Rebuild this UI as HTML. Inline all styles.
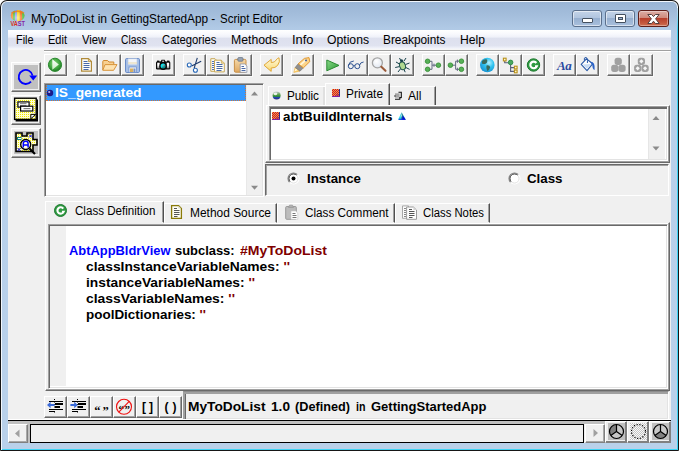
<!DOCTYPE html>
<html><head><meta charset="utf-8"><title>Script Editor</title>
<style>
html,body{margin:0;padding:0;background:#fff;}
body{width:679px;height:451px;overflow:hidden;position:relative;font-family:"Liberation Sans",sans-serif;font-size:12px;color:#000;}
*{box-sizing:border-box;}
div,svg,span{position:absolute;}
#win{left:0;top:0;width:679px;height:451px;border-radius:7px 7px 1px 1px;background:#161616;}
#win2{left:1px;top:1px;width:677px;height:449px;border-radius:6px 6px 0 0;background:#f2f7fc;}
#win3{left:2px;top:8px;width:676px;height:442px;background:linear-gradient(to bottom,#c8dcf0 0,#3dd4f5 22px,#3dd4f5 100%);}
#frame{left:2px;top:2px;width:675px;height:447px;border-radius:5px 5px 0 0;
 background:linear-gradient(to bottom,#9ab5d4 0px,#a3bddb 12px,#b1cae6 27px,#b8d0ea 56px,#b9d1ea 100%);}
#client{left:8px;top:30px;width:663px;height:413px;background:#f0f0f0;}
.t{white-space:nowrap;transform-origin:0 50%;line-height:16px;height:16px;}
#menubar{left:8px;top:30px;width:663px;height:19px;background:linear-gradient(to bottom,#ffffff 0,#f8f9fd 20%,#eff1f9 38%,#dde0ee 42%,#e0e3f0 82%,#eceef7 92%,#f6f7fb 100%);}
.tb{width:23px;height:22px;background:#f0f0f0;border:1px solid;border-color:#fff #696969 #696969 #fff;box-shadow:inset -1px -1px 0 #a0a0a0,1px 1px 0 #fafafa;}
.tb svg{left:0;top:0;width:21px;height:20px;overflow:visible;}
.sunk{border:1px solid;border-color:#a0a0a0 #fff #fff #a0a0a0;box-shadow:inset 1px 1px 0 #696969,inset -1px -1px 0 #e3e3e3;background:#fff;}
.b{font-weight:bold;font-size:13.6px;}
.tab{background:#f0f0f0;border:1px solid;border-color:#fff #505050 transparent #fff;box-shadow:inset -1px 0 0 #a0a0a0;}
.cap{border-radius:3px;border:1px solid #5a6f8c;background:linear-gradient(#c4d4e8 0,#b1c5df 45%,#97b0d0 50%,#a9c0dd 100%);box-shadow:inset 0 0 0 1px rgba(255,255,255,.55);}
.lb{width:30px;height:30px;background:#f0f0f0;border:1px solid;border-color:#fff #696969 #696969 #fff;box-shadow:inset -1px -1px 0 #a0a0a0;}
.lb div{}
</style></head><body>
<div id="win"></div><div id="win2"></div><div id="win3"></div><div id="frame"></div>
<div id="client"></div><div id="menubar"></div>
<div style="left:8px;top:49px;width:663px;height:1px;background:#f6f6f6"></div>
<svg style="left:8px;top:8px;width:20px;height:20px" viewBox="8 8 20 20"><defs><linearGradient id="bal" x1="0" x2="1"><stop offset="0" stop-color="#f08a28"/><stop offset=".13" stop-color="#f08a28"/><stop offset=".17" stop-color="#4cba3c"/><stop offset=".29" stop-color="#4cba3c"/><stop offset=".33" stop-color="#7a94f0"/><stop offset=".43" stop-color="#7a94f0"/><stop offset=".47" stop-color="#f8d418"/><stop offset=".62" stop-color="#f8d418"/><stop offset=".66" stop-color="#f06a18"/><stop offset=".8" stop-color="#f06a18"/><stop offset=".84" stop-color="#58bc40"/><stop offset="1" stop-color="#58bc40"/></linearGradient>
<radialGradient id="balh" cx="45%" cy="70%" r="60%"><stop offset="0" stop-color="#fff" stop-opacity=".55"/><stop offset="1" stop-color="#fff" stop-opacity="0"/></radialGradient></defs>
<ellipse cx="17.7" cy="15.6" rx="6.9" ry="5.6" fill="url(#bal)"/><ellipse cx="17.7" cy="15.6" rx="6.9" ry="5.6" fill="url(#balh)"/><path d="M11.5 13 Q17.7 9.5 24 13" fill="none" stroke="#f08020" stroke-width="1.6" opacity=".8"/>
<text x="10.4" y="26" font-family="Liberation Sans,sans-serif" font-size="6.4" font-weight="bold" textLength="14.6" lengthAdjust="spacingAndGlyphs"><tspan fill="#d83020">VA</tspan><tspan fill="#8424a4">ST</tspan></text></svg>
<div class="t " id="t0" style="transform:scaleX(1.0098);left:30.5px;top:10.7px;">MyToDoList in</div>
<div class="t " id="t1" style="transform:scaleX(0.9834);left:110.7px;top:10.7px;">GettingStartedApp -</div>
<div class="t " id="t2" style="transform:scaleX(0.9593);left:220px;top:10.7px;">Script Editor</div>
<div class="t " id="t3" style="transform:scaleX(0.9047);left:15.5px;top:31.5px;">File</div>
<div class="t " id="t4" style="transform:scaleX(0.9184);left:47.5px;top:31.5px;">Edit</div>
<div class="t " id="t5" style="transform:scaleX(0.9381);left:81.5px;top:31.5px;">View</div>
<div class="t " id="t6" style="transform:scaleX(0.8562);left:120.8px;top:31.5px;">Class</div>
<div class="t " id="t7" style="transform:scaleX(0.9391);left:162px;top:31.5px;">Categories</div>
<div class="t " id="t8" style="transform:scaleX(1.0210);left:231px;top:31.5px;">Methods</div>
<div class="t " id="t9" style="transform:scaleX(1.0742);left:291.5px;top:31.5px;">Info</div>
<div class="t " id="t10" style="transform:scaleX(1.0155);left:327px;top:31.5px;">Options</div>
<div class="t " id="t11" style="transform:scaleX(0.9862);left:383px;top:31.5px;">Breakpoints</div>
<div class="t " id="t12" style="transform:scaleX(1.0127);left:459.5px;top:31.5px;">Help</div>
<div class="cap" style="left:572px;top:10px;width:30px;height:17px"></div>
<div class="cap" style="left:605px;top:10px;width:30px;height:17px"></div>
<div class="cap" style="left:638px;top:10px;width:31px;height:17px;border-color:#5e1f1a;background:linear-gradient(#dcaea6 0,#d08a7c 45%,#b8402c 50%,#c4583e 80%,#cf7052 100%);box-shadow:inset 0 0 0 1px rgba(255,255,255,.35)"></div>
<div style="left:582px;top:18px;width:11px;height:5px;border:1px solid #44505f;background:#fff;border-radius:1px"></div>
<div style="left:615px;top:14px;width:11px;height:9px;border:1px solid #44505f;background:#fff;border-radius:1px"></div>
<div style="left:618px;top:17px;width:5px;height:3px;border:1px solid #44505f;background:#9db4d4"></div>
<svg style="left:646px;top:12.5px;width:15px;height:12px" viewBox="0 0 15 12"><path d="M1.8 1.5 L5.6 1.5 L7.5 3.6 L9.4 1.5 L13.2 1.5 L9.6 5.8 L13.2 10.5 L9.4 10.5 L7.5 8.2 L5.6 10.5 L1.8 10.5 L5.4 5.8 Z" fill="#fff" stroke="#54403f" stroke-width="1"/></svg>
<div style="left:44px;top:50px;width:627px;height:1px;background:#a0a0a0"></div><div style="left:44px;top:51px;width:627px;height:1px;background:#fff"></div>
<div class="tb" style="left:44px;top:54px"><svg viewBox="0 0 21 20"><defs><radialGradient id="gr1" cx="45%" cy="40%" r="60%"><stop offset="0" stop-color="#8ad87a"/><stop offset=".7" stop-color="#3aa03a"/><stop offset="1" stop-color="#1f7a24"/></radialGradient><linearGradient id="gr1b" x1="0" y1="0" x2="0" y2="1"><stop offset="0" stop-color="#fff"/><stop offset="1" stop-color="#c8ecc0"/></linearGradient></defs>
<circle cx="10" cy="9.8" r="6.6" fill="url(#gr1)" stroke="#2c8a30" stroke-width="1"/><path d="M7.3 4.2 L13.8 9.6 L7.3 14.8 Z" fill="url(#gr1b)"/></svg></div>
<div class="tb" style="left:75px;top:54px"><svg viewBox="0 0 21 20"><path d="M5.6 3.6 H12.4 L15.4 6.6 V16.2 H5.6 Z" fill="#fefefa" stroke="#b08a3a" stroke-width="1.2"/><path d="M12.4 3.6 V6.6 H15.4 Z" fill="#f0dca0" stroke="#b08a3a" stroke-width=".8"/>
<path d="M7.5 6.5 H11.5 M7.5 8.5 H13.5 M7.5 10.5 H13.5 M7.5 12.5 H13.5 M7.5 14.5 H12.5" stroke="#4a6aa8" stroke-width="1"/></svg></div>
<div class="tb" style="left:98px;top:54px"><svg viewBox="0 0 21 20"><path d="M3.8 15 V6.6 Q3.8 5.5 4.9 5.5 H8.6 L10 7 H14.8 V9.6" fill="#f8d090" stroke="#d08a30" stroke-width="1"/>
<path d="M3.8 15.3 L6 9.6 H18 L14.6 15.3 Z" fill="#fde2b0" stroke="#d8943a" stroke-width="1"/></svg></div>
<div class="tb" style="left:121px;top:54px"><svg viewBox="0 0 21 20"><rect x="3.5" y="3.5" width="14" height="14" rx="1.2" fill="#a6bfe6" stroke="#6a8cc8" stroke-width="1"/><rect x="6" y="3.8" width="9" height="6" fill="#f4f6fa" stroke="#b8c8e0" stroke-width=".6"/><path d="M6 8 H15" stroke="#e8d8a8" stroke-width="1"/>
<rect x="7" y="12" width="7.5" height="5.3" fill="#f4f4f4" stroke="#6a8cc8" stroke-width=".7"/><rect x="8" y="13.5" width="3.3" height="3.5" fill="#d8b060"/><rect x="11.5" y="13.5" width="2" height="3.5" fill="#7a94c8"/></svg></div>
<div class="tb" style="left:152px;top:54px"><svg viewBox="0 0 21 20"><defs><linearGradient id="cmg" x1="0" y1="0" x2="0" y2="1"><stop offset="0" stop-color="#fff"/><stop offset=".45" stop-color="#fff"/><stop offset="1" stop-color="#8c8c8c"/></linearGradient><linearGradient id="cml" x1="0" y1="0" x2="1" y2="1"><stop offset="0" stop-color="#10f0f8"/><stop offset=".45" stop-color="#10d8e0"/><stop offset=".55" stop-color="#109898"/><stop offset="1" stop-color="#0a8080"/></linearGradient></defs>
<rect x="3" y="6.6" width="14.3" height="7.9" rx="1.2" fill="#080808"/><rect x="4" y="5.6" width="2.4" height="1.6" fill="#080808"/><rect x="14" y="5.6" width="2.4" height="1.6" fill="#080808"/><path d="M7.4 7 L8.6 4.8 H11.6 L12.8 7 Z" fill="#080808"/><rect x="9.2" y="5.7" width="1.9" height="1" fill="#fff"/>
<rect x="4.2" y="7.7" width="2.5" height="5.6" fill="url(#cmg)"/><rect x="13.7" y="7.7" width="2.5" height="5.6" fill="url(#cmg)"/>
<circle cx="10.1" cy="11.2" r="3.8" fill="#080808"/><circle cx="10.1" cy="11.1" r="2.5" fill="url(#cml)"/><circle cx="10.6" cy="10.6" r=".9" fill="#a09090" opacity=".8"/></svg></div>
<div class="tb" style="left:183px;top:54px"><svg viewBox="0 0 21 20"><path d="M13.3 2.8 L10.2 13.2 M17.2 6.2 L7.6 11" stroke="#1c3a6c" stroke-width="1.1" fill="none"/>
<circle cx="5.3" cy="10" r="2" fill="#fff" stroke="#2a6ab8" stroke-width="1.1"/><circle cx="11.4" cy="15.3" r="2" fill="#fff" stroke="#2a6ab8" stroke-width="1.1"/></svg></div>
<div class="tb" style="left:206px;top:54px"><svg viewBox="0 0 21 20"><path d="M3.8 3.7 H8 L10 5.7 V16.3 H3.8 Z" fill="#fdfdf6" stroke="#c8a858"/><path d="M5 6.5 H7 M5 8.5 H7 M5 10.5 H7 M5 12.5 H7 M5 14.5 H7" stroke="#4f6fb3" stroke-width="1"/>
<path d="M7.5 5.2 H14.3 L17.3 8.2 V16.9 H7.5 Z" fill="#fefefa" stroke="#c8a858"/><path d="M14.3 5.2 V8.2 H17.3" fill="#f0dca0" stroke="#c8a858" stroke-width=".8"/><path d="M9.5 7.5 H12.5 M9.5 9.5 H15.5 M9.5 11.5 H15.5 M9.5 13.5 H15.5 M9.5 15.5 H14.5" stroke="#4a6aa8" stroke-width="1"/></svg></div>
<div class="tb" style="left:229px;top:54px"><svg viewBox="0 0 21 20"><defs><linearGradient id="pb" x1="0" y1="0" x2="0" y2="1"><stop offset="0" stop-color="#f4d8a8"/><stop offset="1" stop-color="#e0a860"/></linearGradient></defs><rect x="4.4" y="4.4" width="11.6" height="12.8" rx="1.2" fill="url(#pb)" stroke="#c89048"/><rect x="7.8" y="2.6" width="5.2" height="3.6" rx="1" fill="#98a4b4" stroke="#6a7686" stroke-width=".8"/>
<path d="M10.2 9 H14.8 L16.9 11 V17.3 H10.2 Z" fill="#fdfdfd" stroke="#8a94a8" stroke-width=".8"/><path d="M11.5 11.5 H14 M11.5 13.5 H15.5 M11.5 15.5 H15.5" stroke="#4a6aa8" stroke-width="1"/></svg></div>
<div class="tb" style="left:260px;top:54px"><svg viewBox="0 0 21 20"><defs><linearGradient id="ug" x1="0" y1="0" x2="0" y2="1"><stop offset="0" stop-color="#fffbe0"/><stop offset="1" stop-color="#f9d870"/></linearGradient></defs><path d="M3 10.2 L10.2 4.4 V7.6 Q14 7.6 15.2 5 Q16.2 3.2 18 2.8 Q19.4 7 16.6 10.4 Q14.4 13.2 10.2 13 V16.4 Z" fill="url(#ug)" stroke="#e0a838" stroke-width="1" stroke-linejoin="round"/></svg></div>
<div class="tb" style="left:291px;top:54px"><svg viewBox="0 0 21 20"><path d="M1.8 17.4 L3.2 12.4 L8 16 Z" fill="#fbd070" stroke="#f0b040" stroke-width=".6"/><path d="M2.4 16.6 L3.6 13.4 L5.6 15 Z" fill="#fff8e0"/><path d="M3.2 12.4 L6.2 8.8 L11.4 12.8 L8 16.2 Z" fill="#909090" stroke="#707070" stroke-width=".6"/>
<path d="M6.2 8.8 L12.4 3.4 L17 2.6 L17.8 6.6 L11.4 12.8 Z" fill="#fbd48a" stroke="#e09020" stroke-width=".9"/><path d="M8.4 9.8 L14 4.8" stroke="#fff6dc" stroke-width="1.8"/><circle cx="14" cy="5.4" r=".9" fill="#2a4a9a"/></svg></div>
<div class="tb" style="left:322px;top:54px"><svg viewBox="0 0 21 20"><defs><linearGradient id="gg2" x1="0" y1="0" x2="1" y2="1"><stop offset="0" stop-color="#8ad88a"/><stop offset="1" stop-color="#2a9a32"/></linearGradient></defs><path d="M3.8 5 L16 10.4 L3.8 15.8 Z" fill="url(#gg2)" stroke="#2c8a34" stroke-width="1" stroke-linejoin="round"/></svg></div>
<div class="tb" style="left:345px;top:54px"><svg viewBox="0 0 21 20"><circle cx="4.8" cy="11.2" r="2.5" fill="none" stroke="#2a4f8f" stroke-width="1"/><circle cx="11.3" cy="11.2" r="2.5" fill="none" stroke="#2a4f8f" stroke-width="1"/>
<path d="M7.3 10.8 Q8 9.9 8.8 10.8 M2.4 10.4 Q3.2 6.2 7.8 6 M13.6 10.2 Q14.2 7.2 17.6 7" fill="none" stroke="#2a4f8f" stroke-width=".95"/></svg></div>
<div class="tb" style="left:368px;top:54px"><svg viewBox="0 0 21 20"><defs><radialGradient id="fg" cx="40%" cy="35%" r="70%"><stop offset="0" stop-color="#ffffff"/><stop offset="1" stop-color="#dfe6f0"/></radialGradient></defs><circle cx="8.4" cy="7.8" r="5" fill="url(#fg)" stroke="#a4a4a4" stroke-width="1.3"/><path d="M12.3 11.8 L16.5 15.8" stroke="#9a5a3a" stroke-width="2.1" stroke-linecap="round"/></svg></div>
<div class="tb" style="left:391px;top:54px"><svg viewBox="0 0 21 20"><path d="M7.5 3 L9 6 M14 3 L12 6 M4 7 L7.5 9 M17.5 8 L13.5 9.5 M3.2 12.5 L7.4 11.6 M6 17 L8.4 14 M13.2 17.2 L12 14.4 M17.6 14.4 L13.6 12.4" stroke="#163f4a" stroke-width="1" fill="none"/>
<ellipse cx="10.5" cy="10.8" rx="2.9" ry="4" fill="#b0d890" stroke="#1a5048" stroke-width="1" transform="rotate(-18 10.5 10.8)"/><circle cx="9.6" cy="5.8" r="1.5" fill="#163f4a"/></svg></div>
<div class="tb" style="left:422px;top:54px"><svg viewBox="0 0 21 20"><path d="M6 6.3 H9 V14.3 H6 M9 10.2 H13" fill="none" stroke="#666c84" stroke-width="1"/><path d="M11 8.6 V11.8" stroke="#666c84" stroke-width="1"/><circle cx="4.6" cy="6.3" r="2.3" fill="#58b058" stroke="#2e8a2e" stroke-width=".8"/><circle cx="4.6" cy="14.3" r="2.3" fill="#58b058" stroke="#2e8a2e" stroke-width=".8"/><circle cx="15.4" cy="10.2" r="2.3" fill="#58b058" stroke="#2e8a2e" stroke-width=".8"/></svg></div>
<div class="tb" style="left:445px;top:54px"><svg viewBox="0 0 21 20"><path d="M13.6 6.2 H9.6 V14.3 H13.6 M9.6 10.2 H6" fill="none" stroke="#666c84" stroke-width="1"/><path d="M11.4 4.6 V7.8 M11.4 12.7 V15.9" stroke="#666c84" stroke-width="1"/><circle cx="15.4" cy="6.2" r="2.3" fill="#58b058" stroke="#2e8a2e" stroke-width=".8"/><circle cx="15.4" cy="14.3" r="2.3" fill="#58b058" stroke="#2e8a2e" stroke-width=".8"/><circle cx="4.4" cy="10.2" r="2.3" fill="#58b058" stroke="#2e8a2e" stroke-width=".8"/></svg></div>
<div class="tb" style="left:476px;top:54px"><svg viewBox="0 0 21 20"><defs><radialGradient id="gg" cx="62%" cy="35%" r="70%"><stop offset="0" stop-color="#b8f0ff"/><stop offset=".45" stop-color="#30c4f0"/><stop offset="1" stop-color="#1890d0"/></radialGradient></defs><circle cx="10.3" cy="10" r="7.3" fill="url(#gg)"/>
<path d="M5 6 Q7.5 3.6 10 4.6 Q11 7.4 8.6 8.8 Q6.4 9.6 5 8.4 Z M9.4 10.4 Q12.6 9.8 13.2 12.2 Q12.4 15.6 10.2 16 Q9 13.2 9.4 10.4 Z" fill="#3a6a5c"/></svg></div>
<div class="tb" style="left:499px;top:54px"><svg viewBox="0 0 21 20"><path d="M4.7 6 V7.7 H8.6 M10.6 9 V16.4 H14.4 M10.6 12.6 H14.4" fill="none" stroke="#5a607a" stroke-width="1.1"/><rect x="3.4" y="3.2" width="2.7" height="2.7" fill="#fff6c8" stroke="#b8901a" stroke-width="1.1"/><circle cx="10.6" cy="7.4" r="2.3" fill="#4aa860" stroke="#2a8a44" stroke-width=".9"/>
<rect x="14.4" y="11.2" width="2.7" height="2.7" fill="#fff6c8" stroke="#b8901a" stroke-width="1.1"/><rect x="14.4" y="15.1" width="2.7" height="2.7" fill="#fff6c8" stroke="#b8901a" stroke-width="1.1"/></svg></div>
<div class="tb" style="left:522px;top:54px"><svg viewBox="0 0 21 20"><circle cx="10.5" cy="10" r="6.2" fill="#2f9a42" stroke="#1f7a30" stroke-width="1"/><path d="M13.3 8 A3.3 3.3 0 1 0 13.6 11.4 H12" fill="none" stroke="#fff" stroke-width="2.2"/></svg></div>
<div class="tb" style="left:553px;top:54px"><span style="left:3px;top:2.5px;width:17px;height:16px;font-family:'Liberation Serif',serif;font-style:italic;font-weight:bold;font-size:13px;line-height:16px;color:#2a4aa0;letter-spacing:-.3px">Aa</span></div>
<div class="tb" style="left:576px;top:54px"><svg viewBox="0 0 21 20"><path d="M4.2 9.4 L9.4 3.8 L15.6 8.8 L10 15.6 Z" fill="#fdfdfd" stroke="#2a5aa8" stroke-width="1.1" stroke-linejoin="round"/><path d="M5.6 9.6 L10 13.8 L14 9 Z" fill="#c8dcf4"/><path d="M7.4 5.6 Q6.6 2.2 9 2.4 Q10.8 2.8 10.4 8" fill="none" stroke="#2a5aa8" stroke-width="1"/>
<path d="M13.4 6.8 Q18.4 6.6 17.6 15 Q15.4 14.6 15.4 10.6 Z" fill="#2a62c8"/></svg></div>
<div class="tb" style="left:607px;top:54px"><svg viewBox="0 0 21 20"><rect x="6.6" y="2.7" width="7.2" height="7.2" rx="2.6" fill="#a0a0a0"/><rect x="3.2" y="9.7" width="7.2" height="7.2" rx="2.6" fill="#a0a0a0"/><rect x="10.4" y="9.7" width="7.2" height="7.2" rx="2.6" fill="#a0a0a0"/></svg></div>
<div class="tb" style="left:630px;top:54px"><svg viewBox="0 0 21 20"><rect x="6.8" y="2.7" width="7.2" height="7.2" rx="2.6" fill="#a0a0a0"/><rect x="3.1" y="9.7" width="7.2" height="7.2" rx="2.6" fill="#a0a0a0"/><rect x="10.5" y="9.7" width="7.2" height="7.2" rx="2.6" fill="#a0a0a0"/>
<path d="M10.4 4.2 L12.5 6.3 L10.4 8.4 L8.3 6.3Z M6.7 11.2 L8.8 13.3 L6.7 15.4 L4.6 13.3Z M14.1 11.2 L16.2 13.3 L14.1 15.4 L12 13.3Z" fill="#f6f6f6"/></svg></div>
<div class="lb" style="left:11px;top:62px"><div style="left:2px;top:2px;width:24px;height:24px;background:#c0c0c0"></div></div>
<div class="lb" style="left:11px;top:95px"></div>
<div class="lb" style="left:11px;top:128px"><div style="left:2px;top:2px;width:24px;height:23px;background:#c0c0c0"></div></div>
<svg style="left:0;top:58px;width:50px;height:105px" viewBox="0 58 50 105"><defs><pattern id="dots" width="2" height="2" patternUnits="userSpaceOnUse"><rect width="2" height="2" fill="#ffffd0"/><rect width="1" height="1" fill="#f0e800"/></pattern>
<pattern id="rd" width="2" height="2" patternUnits="userSpaceOnUse"><rect width="2" height="2" fill="#d01030"/><rect width="1" height="1" fill="#f0a040"/><rect x="1" y="1" width="1" height="1" fill="#f0a040"/></pattern></defs>
<path d="M31 81.6 A7 7 0 1 1 32.6 75.6" fill="none" stroke="#0000ff" stroke-width="1.8"/><path d="M29.2 75.4 H37.2 L33.2 80.4 Z" fill="#0000ff"/>
<path d="M37.2 99.6 V120.7 H15.6" fill="none" stroke="#000" stroke-width="1.6"/>
<rect x="14.6" y="98.2" width="21.6" height="21.2" fill="url(#dots)" stroke="#000" stroke-width="1.4"/>
<path d="M30.8 118.8 V114.4 H35.6 Z" fill="#fff" stroke="#000" stroke-width="1"/>
<rect x="17.9" y="101.9" width="11.2" height="5.2" fill="#fff" stroke="#000" stroke-width="1.2"/><path d="M20 103.6 H26.5 M20 105.4 H26.5" stroke="#808080" stroke-width="1"/>
<rect x="20.6" y="106.2" width="12.2" height="4.8" fill="#fff" stroke="#000" stroke-width="1.2"/><path d="M23.5 108.6 H30.5" stroke="#808080" stroke-width="1.2"/>
<path d="M16 133 H22 V136 H27 V133 H33 V139.5 H37 V145 H33 V151.5 H16 Z" fill="url(#dots)" stroke="#000" stroke-width="1.6"/>
<rect x="17.5" y="137.5" width="3.5" height="2" fill="#fff" stroke="#108080" stroke-width="1"/>
<path d="M29 134.5 L32 137.5 M32 134.5 L29 137.5 M17.5 148 L20.5 151 M20.5 148 L17.5 151" stroke="#0000e0" stroke-width="1"/>
<circle cx="25.7" cy="144.5" r="5" fill="#ffffe0" stroke="#000" stroke-width="1.4"/><path d="M29.5 148.5 L35 154" stroke="#000" stroke-width="2.2"/>
<path d="M23.3 147.5 V143.5 Q23.3 141.3 25.7 141.3 Q28.1 141.3 28.1 143.5 V147.5 M23.3 145 H28.1" fill="none" stroke="#0000ff" stroke-width="1.5"/></svg>
<div class="sunk" style="left:44px;top:83px;width:220px;height:114px"></div>
<div style="left:246px;top:85px;width:16px;height:110px;background:#f0f0f0;border-left:1px solid #e8e8e8"></div>
<div style="left:46px;top:85px;width:200px;height:16px;background:#3399ff;border:1px dotted #d0743a;border-top-color:#3399ff"></div>
<svg style="left:46px;top:89px;width:8px;height:8px" viewBox="0 0 8 8"><circle cx="4" cy="4" r="3.2" fill="#1a1a8a"/><circle cx="3.2" cy="3" r="1.1" fill="#b8b8e8"/></svg>
<div class="t b" id="t13" style="transform:scaleX(1.0132);left:54.5px;top:85px;color:#fff">IS_generated</div>
<svg style="left:0;top:0;width:679px;height:451px;pointer-events:none" viewBox="0 0 679 451"><polygon points="251,95.5 254.5,91.5 258,95.5" fill="#8a8a8a"/></svg>
<svg style="left:0;top:0;width:679px;height:451px;pointer-events:none" viewBox="0 0 679 451"><polygon points="251,185.8 254.5,189.8 258,185.8" fill="#8a8a8a"/></svg>
<div class="tab" style="left:268px;top:86px;width:58px;height:20px;border-right-color:transparent;box-shadow:inset -2px 0 0 #e0e0e0"></div>
<div class="tab" style="left:389px;top:86px;width:47px;height:20px;border-left-color:transparent"></div>
<div class="tab" style="left:325px;top:83px;width:65px;height:24px"></div>
<svg style="left:272px;top:91px;width:9px;height:9px" viewBox="0 0 9 9"><defs><linearGradient id="pg" x1="0" y1="0" x2="0" y2="1"><stop offset="0" stop-color="#c8ccd4"/><stop offset=".4" stop-color="#58a048"/><stop offset=".62" stop-color="#2c8a3c"/><stop offset=".7" stop-color="#2848c0"/><stop offset="1" stop-color="#203070"/></linearGradient></defs><circle cx="4.6" cy="4.5" r="4" fill="url(#pg)"/><ellipse cx="3.4" cy="2.8" rx="2" ry="1.4" fill="#fff" opacity=".85"/></svg>
<div class="t " id="t14" style="transform:scaleX(0.9790);left:287px;top:87.5px;">Public</div>
<svg style="left:332px;top:89px;width:8px;height:8px" viewBox="0 0 8 8"><rect width="8" height="8" fill="url(#rd)"/><rect x="7" y="0" width="1" height="8" fill="#2a2a90"/><rect x="0" y="7" width="8" height="1" fill="#8020a0"/><rect x="4" y="5" width="3" height="2" fill="#a03060" opacity=".6"/></svg>
<div class="t " id="t15" style="transform:scaleX(0.9904);left:346px;top:85.5px;">Private</div>
<svg style="left:393px;top:90px;width:11px;height:11px" viewBox="393 90 11 11"><rect x="395" y="93.3" width="4.6" height="4.4" fill="#a4a4a4"/><path d="M398.5 92.3 H401.3 V98 M401.3 97.6 H399.8 V99.3 H395" fill="none" stroke="#111" stroke-width="1.1"/><path d="M394.2 96 H395.6" stroke="#111" stroke-width="1"/></svg>
<div class="t " id="t16" style="transform:scaleX(1.0117);left:408px;top:87.5px;">All</div>
<div style="left:266px;top:105px;width:404px;height:1px;background:#fff"></div><div style="left:266px;top:105px;width:1px;height:58px;background:#fff"></div>
<div style="left:265px;top:105px;width:405px;height:58px;border:1px solid;border-color:transparent #696969 #696969 transparent;box-shadow:inset -1px -1px 0 #a0a0a0"></div>
<div class="sunk" style="left:269px;top:106px;width:399px;height:55px;box-shadow:inset 1px 2px 0 #696969,inset -1px -1px 0 #e3e3e3"></div>
<div style="left:648px;top:109px;width:17px;height:50px;background:#f0f0f0;border-left:1px solid #e6e6e6"></div>
<svg style="left:0;top:0;width:679px;height:451px;pointer-events:none" viewBox="0 0 679 451"><polygon points="652.5,120 656,116 659.5,120" fill="#8a8a8a"/></svg>
<svg style="left:0;top:0;width:679px;height:451px;pointer-events:none" viewBox="0 0 679 451"><polygon points="652.5,146.5 656,150.5 659.5,146.5" fill="#8a8a8a"/></svg>
<svg style="left:272px;top:112px;width:8px;height:8px" viewBox="0 0 8 8"><rect width="8" height="8" fill="url(#rd)"/><rect x="7" y="0" width="1" height="8" fill="#2a2a90"/><rect x="0" y="7" width="8" height="1" fill="#8020a0"/><rect x="4" y="5" width="3" height="2" fill="#a03060" opacity=".6"/></svg>
<div class="t b" id="t17" style="transform:scaleX(0.9862);left:282.5px;top:108.5px;">abtBuildInternals</div>
<svg style="left:398px;top:112px;width:8px;height:8px" viewBox="0 0 8 8"><path d="M3.6 .3 L0 7.8 H3 Z" fill="#30dce8"/><path d="M3.6 .3 L3 7.8 H7.8 Z" fill="#1c8a94"/><path d="M4.6 3.6 L7.8 7.8 H4.2 Z" fill="#0808d8"/><path d="M1 6.8 H7 V7.8 H.5 Z" fill="#0a20e0"/><path d="M3.4 2 L2.6 4.6 L3.8 4.4 Z" fill="#d8f0ff"/></svg>
<div style="left:265px;top:164px;width:404px;height:32px;border:1px solid;border-color:#696969 #fff #fff #696969;box-shadow:inset 1px 1px 0 #a0a0a0"></div>
<svg style="left:287px;top:171.5px;width:13px;height:13px" viewBox="0 0 13 13"><circle cx="6.5" cy="6.5" r="5" fill="#fff"/><path d="M2.6 10.4 A5.5 5.5 0 0 1 10.4 2.6" fill="none" stroke="#808080" stroke-width="1.1"/><path d="M10.4 2.6 A5.5 5.5 0 0 1 2.6 10.4" fill="none" stroke="#ffffff" stroke-width="1.1"/><path d="M3.3 9.7 A4.5 4.5 0 0 1 9.7 3.3" fill="none" stroke="#404040" stroke-width="1"/><path d="M9.7 3.3 A4.5 4.5 0 0 1 3.3 9.7" fill="none" stroke="#e3e3e3" stroke-width="1"/><circle cx="6.5" cy="6.5" r="2" fill="#000"/></svg>
<svg style="left:507.5px;top:171.5px;width:13px;height:13px" viewBox="0 0 13 13"><circle cx="6.5" cy="6.5" r="5" fill="#fff"/><path d="M2.6 10.4 A5.5 5.5 0 0 1 10.4 2.6" fill="none" stroke="#808080" stroke-width="1.1"/><path d="M10.4 2.6 A5.5 5.5 0 0 1 2.6 10.4" fill="none" stroke="#ffffff" stroke-width="1.1"/><path d="M3.3 9.7 A4.5 4.5 0 0 1 9.7 3.3" fill="none" stroke="#404040" stroke-width="1"/><path d="M9.7 3.3 A4.5 4.5 0 0 1 3.3 9.7" fill="none" stroke="#e3e3e3" stroke-width="1"/></svg>
<div class="t b" id="t18" style="transform:scaleX(0.9790);left:306.5px;top:170.8px;">Instance</div>
<div class="t b" id="t19" style="transform:scaleX(0.9785);left:527px;top:170.8px;">Class</div>
<div class="tab" style="left:164px;top:203px;width:113px;height:20px"></div>
<div class="tab" style="left:277px;top:203px;width:118px;height:20px"></div>
<div class="tab" style="left:395px;top:203px;width:95px;height:20px"></div>
<div class="tab" style="left:45px;top:201px;width:119px;height:22px"></div>
<svg style="left:54px;top:204px;width:13px;height:13px" viewBox="3.8 3.3 13.4 13.4"><circle cx="10.5" cy="10" r="6.2" fill="#2f9a42" stroke="#1f7a30" stroke-width="1"/><path d="M13.3 8 A3.3 3.3 0 1 0 13.6 11.4 H12" fill="none" stroke="#fff" stroke-width="2.2"/></svg>
<div class="t " id="t20" style="transform:scaleX(0.9655);left:74.5px;top:202.5px;">Class Definition</div>
<svg style="left:160px;top:200px;width:270px;height:24px" viewBox="160 200 270 24">
<path d="M171.6 205.6 H178.6 L181.4 208.4 V218.4 H171.6 Z" fill="#fefef6" stroke="#8a7a08" stroke-width="1.3"/><path d="M178.4 205.8 V208.6 H181.2 Z" fill="#d8d8c8"/>
<path d="M174 208.5 H177 M174 210.5 H179.5 M174 212.5 H179.5 M174 214.5 H179.5 M174 216.5 H177.5" stroke="#555" stroke-width="1"/>
<rect x="285.7" y="206.5" width="10.6" height="12.8" rx="1" fill="#bcbcbc" stroke="#9a9a9a" stroke-width="1"/><path d="M288.5 207.5 L289.5 205.2 H292.5 L293.5 207.5 Z" fill="#b0b0b0" stroke="#9a9a9a" stroke-width=".8"/>
<path d="M291 211 H295.6 L297.8 213 V219.3 H291 Z" fill="#fff" stroke="#c8c8c8" stroke-width=".6"/><path d="M292.5 213.5 H295.5 M292.5 215.5 H296.5 M292.5 217.5 H296.5" stroke="#777" stroke-width="1"/>
<path d="M402.5 205.9 H408.5 V218.3 H402.5 Z" fill="#fcfcfc" stroke="#a8a8a8" stroke-width="1"/><path d="M404 208.5 H406 M404 210.5 H406 M404 212.5 H406 M404 214.5 H406 M404 216.5 H406" stroke="#888" stroke-width="1"/>
<path d="M406.6 207 H413.4 L416.5 210 V219.3 H406.6 Z" fill="#fefefe" stroke="#9c9c9c" stroke-width="1"/><path d="M413.4 207 V210 H416.5 Z" fill="#d4d4d4"/>
<path d="M409 209.5 H412 M409 211.5 H414.5 M409 213.5 H414.5 M409 215.5 H414.5 M409 217.5 H412.5" stroke="#555" stroke-width="1"/></svg>
<div class="t " id="t21" style="transform:scaleX(0.9952);left:190px;top:204.5px;">Method Source</div>
<div class="t " id="t22" style="transform:scaleX(0.9782);left:305px;top:204.5px;">Class Comment</div>
<div class="t " id="t23" style="transform:scaleX(0.9430);left:423.3px;top:204.5px;">Class Notes</div>
<div style="left:164px;top:223px;width:505px;height:1px;background:#fff"></div><div style="left:45px;top:222px;width:1px;height:169px;background:#fff"></div>
<div style="left:45px;top:222px;width:625px;height:169px;border:1px solid;border-color:transparent #696969 #696969 transparent;box-shadow:inset -1px -1px 0 #a0a0a0"></div>
<div class="sunk" style="left:48px;top:224px;width:620px;height:165px"></div>
<div style="left:50px;top:226px;width:16px;height:160px;background:#f0f0f0"></div>
<div class="t b" id="t24" style="transform:scaleX(0.9486);left:69px;top:242.5px;color:#0000ff">AbtAppBldrView</div>
<div class="t b" id="t25" style="transform:scaleX(0.9503);left:174.8px;top:242.5px;">subclass:</div>
<div class="t b" id="t26" style="transform:scaleX(1.0315);left:240.2px;top:242.5px;color:#800000">#MyToDoList</div>
<div class="t b" id="t27" style="transform:scaleX(1.0166);left:85.5px;top:258.5px;">classInstanceVariableNames: <span style="position:static;color:#800000">''</span></div>
<div class="t b" id="t28" style="transform:scaleX(1.0141);left:85.5px;top:274.5px;">instanceVariableNames: <span style="position:static;color:#800000">''</span></div>
<div class="t b" id="t29" style="transform:scaleX(1.0238);left:85.5px;top:290.5px;">classVariableNames: <span style="position:static;color:#800000">''</span></div>
<div class="t b" id="t30" style="transform:scaleX(0.9894);left:85.5px;top:306.5px;">poolDictionaries: <span style="position:static;color:#800000">''</span></div>
<div class="tb" style="left:44px;top:396px"><svg viewBox="0 0 21 20"><path d="M4 4.5 H18 M4 12.5 H18 M4 14.5 H10" stroke="#000" stroke-width="1"/><path d="M10 7 H18 M10 10 H15" stroke="#000" stroke-width="2"/><path d="M9.5 2 V17" stroke="#000" stroke-width="1" stroke-dasharray="1 1.5"/><path d="M2 8 L5.6 4.8 V6.9 H9.6 V9.1 H5.6 V11.2 Z" fill="#3a6ad8"/></svg></div>
<div class="tb" style="left:67px;top:396px"><svg viewBox="0 0 21 20"><path d="M4 4.5 H18 M4 12.5 H18 M4 14.5 H10" stroke="#000" stroke-width="1"/><path d="M10 7 H18 M10 10 H15" stroke="#000" stroke-width="2"/><path d="M9.5 2 V17" stroke="#000" stroke-width="1" stroke-dasharray="1 1.5"/><path d="M9.8 8 L6.2 4.8 V6.9 H2.4 V9.1 H6.2 V11.2 Z" fill="#3a6ad8"/></svg></div>
<div class="tb" style="left:90px;top:396px"><span style="left:0;top:6px;width:21px;text-align:center;font-weight:bold;font-size:12.5px;line-height:16px;font-family:'Liberation Serif',serif;letter-spacing:2px;padding-left:2px">“”</span></div>
<div class="tb" style="left:113px;top:396px"><span style="left:0;top:4.5px;width:21px;text-align:center;font-weight:bold;font-size:11px;line-height:14px;font-family:'Liberation Serif',serif;letter-spacing:.5px">“”</span><svg viewBox="0 0 21 20"><circle cx="10" cy="9.8" r="7.5" fill="none" stroke="#f01010" stroke-width="1.1"/><path d="M4.8 15.2 L15.2 4.4" stroke="#f01010" stroke-width="1.1"/></svg></div>
<div class="tb" style="left:136px;top:396px"><span style="left:0;top:1.5px;width:21px;text-align:center;font-weight:bold;font-size:12px;line-height:16px;letter-spacing:3px;padding-left:3px">[]</span></div>
<div class="tb" style="left:159px;top:396px"><span style="left:0;top:1.5px;width:21px;text-align:center;font-weight:bold;font-size:12px;line-height:16px;letter-spacing:4px;padding-left:4px">()</span></div>
<div class="sunk" style="left:183px;top:391px;width:486px;height:29px;background:#f0f0f0;border-bottom-color:#f0f0f0;border-top-color:#8c8c8c;box-shadow:inset 1px 2px 0 #a0a0a0,inset 2px 0 0 #696969,inset -1px -1px 0 #e3e3e3"></div>
<div class="t b" id="t31" style="transform:scaleX(1.0094);left:187.5px;top:398.5px;">MyToDoList</div>
<div class="t b" id="t32" style="transform:scaleX(1.0050);left:270.5px;top:398.5px;">1.0</div>
<div class="t b" id="t33" style="transform:scaleX(0.9337);left:294.5px;top:398.5px;">(Defined)</div>
<div class="t b" id="t34" style="transform:scaleX(0.7855);left:355.8px;top:398.5px;">in</div>
<div class="t b" id="t35" style="transform:scaleX(0.9558);left:371px;top:398.5px;">GettingStartedApp</div>
<div style="left:8px;top:419px;width:663px;height:1px;background:#fff"></div><div style="left:8px;top:420px;width:663px;height:1px;background:#000"></div><div style="left:8px;top:421px;width:663px;height:3px;background:#c0c0c0"></div>
<div style="left:8px;top:424px;width:20px;height:19px;background:#f0f0f0;border:1px solid;border-color:#fff #808080 #808080 #fff;box-shadow:inset -1px -1px 0 #a8a8a8"></div>
<svg style="left:0;top:0;width:679px;height:451px;pointer-events:none" viewBox="0 0 679 451"><polygon points="19.5,429.5 15,433.5 19.5,437.5" fill="#a0a0a0"/></svg>
<div style="left:28px;top:424px;width:2px;height:19px;background:#c0c0c0"></div>
<div style="left:30px;top:424px;width:554px;height:19px;border:1px solid #000;background:#f0f0f0"></div>
<div style="left:585px;top:424px;width:20px;height:19px;background:#f0f0f0;border:1px solid;border-color:#fff #808080 #808080 #fff;box-shadow:inset -1px -1px 0 #a8a8a8"></div>
<svg style="left:0;top:0;width:679px;height:451px;pointer-events:none" viewBox="0 0 679 451"><polygon points="593.5,429 598,433 593.5,437" fill="#a0a0a0"/></svg>
<div style="left:605px;top:421px;width:22px;height:22px;background:#f0f0f0;border:1px solid;border-color:#fff #808080 #808080 #fff;box-shadow:inset -1px -1px 0 #808080"><svg style="left:1px;top:0px;width:19px;height:19px" viewBox="0 0 19 19"><rect x="1" y="1" width="17" height="17" fill="#c0c0c0"/><path d="M9.5 9.5 V2.5 A7 7 0 0 0 3.8 13.6 Z" fill="#808080"/><path d="M9.5 9.5 V2.5 A7 7 0 0 1 15.2 13.6 Z" fill="#c8c8c8"/><path d="M9.5 9.5 L3.8 13.6 A7 7 0 0 0 15.2 13.6 Z" fill="#c8c8c8"/><circle cx="9.5" cy="9.5" r="7" fill="none" stroke="#000" stroke-width="1.2"/><path d="M9.5 2.5 V9.5 L3.8 13.6 M9.5 9.5 L15.2 13.6" fill="none" stroke="#000" stroke-width="1.2"/></svg></div>
<div style="left:627px;top:421px;width:22px;height:22px;background:#f0f0f0;border:1px solid;border-color:#fff #808080 #808080 #fff;box-shadow:inset -1px -1px 0 #808080"><svg style="left:1px;top:0px;width:19px;height:19px" viewBox="0 0 19 19"><defs><pattern id="chk" width="2" height="2" patternUnits="userSpaceOnUse"><rect width="2" height="2" fill="#fafafa"/><rect width="1" height="1" fill="#c4c4c4"/><rect x="1" y="1" width="1" height="1" fill="#c4c4c4"/></pattern></defs><rect x="1" y="1" width="17" height="17" fill="url(#chk)"/><circle cx="9.5" cy="9.5" r="7" fill="none" stroke="#000" stroke-width="1.2" stroke-dasharray="1.2 1.6"/></svg></div>
<div style="left:649px;top:421px;width:22px;height:22px;background:#f0f0f0;border:1px solid;border-color:#fff #808080 #808080 #fff;box-shadow:inset -1px -1px 0 #808080"><svg style="left:1px;top:0px;width:19px;height:19px" viewBox="0 0 19 19"><rect x="1" y="1" width="17" height="17" fill="#c0c0c0"/><path d="M9.5 9.5 V2.5 A7 7 0 0 0 3.8 13.6 Z" fill="#c8c8c8"/><path d="M9.5 9.5 V2.5 A7 7 0 0 1 15.2 13.6 Z" fill="#c8c8c8"/><path d="M9.5 9.5 L3.8 13.6 A7 7 0 0 0 15.2 13.6 Z" fill="#808080"/><circle cx="9.5" cy="9.5" r="7" fill="none" stroke="#000" stroke-width="1.2"/><path d="M9.5 2.5 V9.5 L3.8 13.6 M9.5 9.5 L15.2 13.6" fill="none" stroke="#000" stroke-width="1.2"/></svg></div>
</body></html>
